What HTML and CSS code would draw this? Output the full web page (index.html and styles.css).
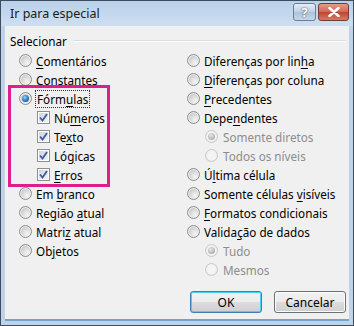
FILE: index.html
```html
<!DOCTYPE html>
<html lang="pt">
<head>
  <meta charset="UTF-8">
  <title>Ir para especial</title>
  <link rel="stylesheet" href="styles.css">
</head>
<body>
  <div class="window">
    <div class="titlebar">
      <span class="title">Ir para especial</span>
      <div class="caption-btns">
        <span class="cap-help">?</span>
        <span class="cap-close">
          <svg width="12" height="10" viewBox="0 0 12 10"><path d="M1.5 1 L10.5 9 M10.5 1 L1.5 9" stroke="#fff" stroke-width="2.6" stroke-linecap="round"/></svg>
        </span>
      </div>
    </div>

    <div class="client">
      <div class="group-label"><span>Selecionar</span><span class="rule"></span></div>

      <div class="columns">
        <div class="col col-left">
          <div class="opt"><span class="radio"></span><span><u>C</u>omentários</span></div>
          <div class="opt"><span class="radio"></span><span>Con<u>s</u>tantes</span></div>
          <div class="opt"><span class="radio checked"></span><span class="focus">Fórm<u>u</u>las</span></div>
          <div class="opt sub"><span class="check"><svg width="9" height="9" viewBox="0 0 9 9"><path d="M1 4.5 L3.5 7.5 L8 1" fill="none" stroke="#3b5ba3" stroke-width="1.8"/></svg></span><span>Nú<u>m</u>eros</span></div>
          <div class="opt sub"><span class="check"><svg width="9" height="9" viewBox="0 0 9 9"><path d="M1 4.5 L3.5 7.5 L8 1" fill="none" stroke="#3b5ba3" stroke-width="1.8"/></svg></span><span>Te<u>x</u>to</span></div>
          <div class="opt sub"><span class="check"><svg width="9" height="9" viewBox="0 0 9 9"><path d="M1 4.5 L3.5 7.5 L8 1" fill="none" stroke="#3b5ba3" stroke-width="1.8"/></svg></span><span>Ló<u>g</u>icas</span></div>
          <div class="opt sub"><span class="check"><svg width="9" height="9" viewBox="0 0 9 9"><path d="M1 4.5 L3.5 7.5 L8 1" fill="none" stroke="#3b5ba3" stroke-width="1.8"/></svg></span><span><u>E</u>rros</span></div>
          <div class="opt"><span class="radio"></span><span>Em <u>b</u>ranco</span></div>
          <div class="opt"><span class="radio"></span><span>Região <u>a</u>tual</span></div>
          <div class="opt"><span class="radio"></span><span>Matri<u>z</u> atual</span></div>
          <div class="opt"><span class="radio"></span><span>Ob<u>j</u>etos</span></div>
          <div class="highlight"></div>
        </div>

        <div class="col col-right">
          <div class="opt"><span class="radio"></span><span>Diferenças por lin<u>h</u>a</span></div>
          <div class="opt"><span class="radio"></span><span><u>D</u>iferenças por coluna</span></div>
          <div class="opt"><span class="radio"></span><span><u>P</u>recedentes</span></div>
          <div class="opt"><span class="radio"></span><span>Depe<u>n</u>dentes</span></div>
          <div class="opt sub disabled"><span class="radio checked"></span><span>Somente diretos</span></div>
          <div class="opt sub disabled"><span class="radio"></span><span>Todos os níveis</span></div>
          <div class="opt"><span class="radio"></span><span>Ú<u>l</u>tima célula</span></div>
          <div class="opt"><span class="radio"></span><span>Somente células <u>v</u>isíveis</span></div>
          <div class="opt"><span class="radio"></span><span><u>F</u>ormatos condicionais</span></div>
          <div class="opt"><span class="radio"></span><span>Valida<u>ç</u>ão de dados</span></div>
          <div class="opt sub disabled"><span class="radio checked"></span><span>Tudo</span></div>
          <div class="opt sub disabled"><span class="radio"></span><span>Mesmos</span></div>
        </div>
      </div>

      <div class="buttons">
        <button class="btn default">OK</button>
        <button class="btn">Cancelar</button>
      </div>
    </div>
  </div>
</body>
</html>
```

FILE: styles.css
```css
body {
    margin: 0;
    font-family: "Noto Sans", "Open Sans", sans-serif;
    font-size: 11.7px;
    color: #000;
}
.window {
    width: 354px;
    height: 326px;
    box-sizing: border-box;
    border: 1px solid #3d4d5e;
    background: #bfd4ea;
    display: flex;
    flex-direction: column;
}
.titlebar {
    height: 25px;
    display: flex;
    align-items: center;
    justify-content: space-between;
    padding: 0 4px 0 9px;
    background: linear-gradient(#bad1ea, #cddff1);
}
.title {
    font-size: 12.5px;
    color: #1a1a1a;
}
.caption-btns {
    display: flex;
    gap: 2px;
    align-self: flex-start;
    margin-top: 2px;
}
.cap-help, .cap-close {
    height: 16px;
    border: 1px solid #6d7f94;
    border-radius: 3px;
    display: flex;
    align-items: center;
    justify-content: center;
}
.cap-help {
    width: 21px;
    background: linear-gradient(#e4edf6, #bfd0e2 50%, #aec2d8 51%, #c6d6e7);
    color: #fff;
    font-weight: bold;
    font-size: 13px;
    text-shadow: 0 0 2px #4f627a, 0 0 1px #4f627a;
}
.cap-close {
    width: 29px;
    border-color: #7a3a32;
    background: linear-gradient(#e59a88, #cf6853 50%, #bd4530 51%, #d77a62);
}
.client {
    flex: 1;
    margin: 0 4px 4px;
    background: #f0f0f0;
    padding: 5px 0 0 0;
    border-bottom: 2px solid #6fa5cc;
}
.group-label {
    height: 20px;
    display: flex;
    align-items: center;
    padding-left: 5px;
}
.rule {
    flex: 1;
    margin: 0 4px 0 6px;
    border-top: 1px solid #d5dfe5;
    border-bottom: 1px solid #fff;
}
.columns {
    display: flex;
}
.col {
    display: flex;
    flex-direction: column;
}
.col-left {
    width: 168px;
    padding-left: 14px;
    position: relative;
}
.opt {
    height: 19px;
    display: flex;
    align-items: center;
    gap: 4px;
    white-space: nowrap;
}
.col-left .opt.sub {
    padding-left: 18px;
}
.col-right .opt.sub {
    padding-left: 18px;
    gap: 5px;
}
.opt u {
    text-decoration-thickness: 1px;
    text-underline-offset: 2px;
}
.disabled {
    color: #8d8d8d;
}
.radio {
    width: 13px;
    height: 13px;
    box-sizing: border-box;
    border-radius: 50%;
    border: 1px solid #8e8e8e;
    background: radial-gradient(circle at 65% 70%, #f6f6f6 0, #dcdcdc 40%, #b9b9b9 100%);
    box-shadow: inset 0 0 0 1px #eeeeee;
    display: flex;
    align-items: center;
    justify-content: center;
    flex: none;
}
.radio.checked::after {
    content: "";
    width: 7px;
    height: 7px;
    border-radius: 50%;
    background: radial-gradient(circle at 40% 35%, #9fd3fa 0, #3c8fd0 40%, #153e74 100%);
}
.disabled .radio {
    border-color: #c8c8c8;
    background: #f4f4f4;
}
.disabled .radio.checked::after {
    background: radial-gradient(circle at 40% 35%, #e8e8e8 0, #b9b9b9 60%, #9e9e9e 100%);
}
.check {
    width: 13px;
    height: 13px;
    box-sizing: border-box;
    border: 1px solid #8f8f8f;
    background: linear-gradient(135deg, #cdd1d7, #f6f6f6);
    box-shadow: inset 0 0 0 1px #fff;
    display: flex;
    align-items: center;
    justify-content: center;
    flex: none;
}
.focus {
    outline: 1px dotted #333;
    outline-offset: 0;
    padding: 0 1px;
}
.highlight {
    position: absolute;
    left: 3px;
    top: 34px;
    width: 96px;
    height: 96px;
    border: 3px solid #dc1f8a;
    pointer-events: none;
}
.buttons {
    display: flex;
    justify-content: flex-end;
    gap: 12px;
    margin-top: 12px;
    padding-right: 3px;
}
.btn {
    width: 72px;
    height: 22px;
    font-family: inherit;
    font-size: 12px;
    border: 1px solid #707070;
    border-radius: 3px;
    background: linear-gradient(#f2f2f2, #ebebeb 50%, #dddddd 51%, #cfcfcf);
    box-shadow: inset 0 0 0 1px #fcfcfc;
    padding: 0;
}
.btn.default {
    border-color: #3c7fb1;
    box-shadow: inset 0 0 0 1px #48d0f8;
}
```
